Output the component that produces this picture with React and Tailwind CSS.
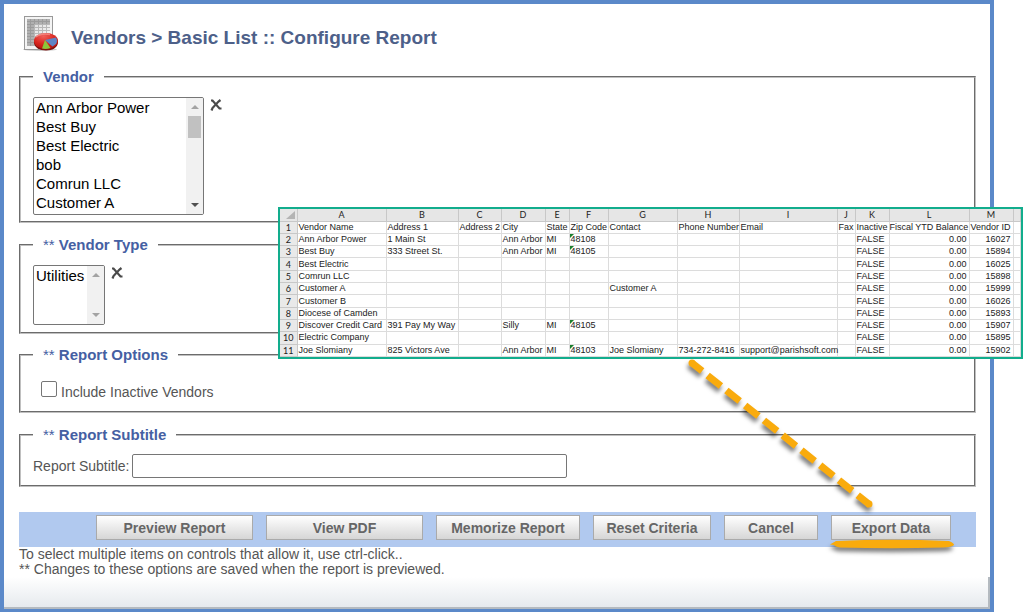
import React from 'react';

const vendors = ['Ann Arbor Power', 'Best Buy', 'Best Electric', 'bob', 'Comrun LLC', 'Customer A', 'Customer B'];

const actions = [
    { label: 'Preview Report', width: 'w-[157px]' },
    { label: 'View PDF', width: 'w-[157px]' },
    { label: 'Memorize Report', width: 'w-36' },
    { label: 'Reset Criteria', width: 'w-[118px]' },
    { label: 'Cancel', width: 'w-[94px]' },
    { label: 'Export Data', width: 'w-[120px]' },
];

const columns = [
    { letter: 'A', title: 'Vendor Name', width: 'w-[89px]' },
    { letter: 'B', title: 'Address 1', width: 'w-[72px]' },
    { letter: 'C', title: 'Address 2', width: 'w-[43px]' },
    { letter: 'D', title: 'City', width: 'w-[44px]' },
    { letter: 'E', title: 'State', width: 'w-[24px]' },
    { letter: 'F', title: 'Zip Code', width: 'w-[39px]' },
    { letter: 'G', title: 'Contact', width: 'w-[69px]' },
    { letter: 'H', title: 'Phone Number', width: 'w-[62px]' },
    { letter: 'I', title: 'Email', width: 'w-[98px]' },
    { letter: 'J', title: 'Fax', width: 'w-[18px]' },
    { letter: 'K', title: 'Inactive', width: 'w-[34px]' },
    { letter: 'L', title: 'Fiscal YTD Balance', width: 'w-[80px]', right: true },
    { letter: 'M', title: 'Vendor ID', width: 'w-[44px]', right: true },
    { letter: '', title: '', width: 'w-[7px]' },
];

const rows = [
    { name: 'Ann Arbor Power', address: '1 Main St', city: 'Ann Arbor', state: 'MI', zip: '48108', id: '16027' },
    { name: 'Best Buy', address: '333 Street St.', city: 'Ann Arbor', state: 'MI', zip: '48105', id: '15894' },
    { name: 'Best Electric', id: '16025' },
    { name: 'Comrun LLC', id: '15898' },
    { name: 'Customer A', contact: 'Customer A', id: '15999' },
    { name: 'Customer B', id: '16026' },
    { name: 'Diocese of Camden', id: '15893' },
    { name: 'Discover Credit Card', address: '391 Pay My Way', city: 'Silly', state: 'MI', zip: '48105', id: '15907' },
    { name: 'Electric Company', id: '15895' },
    {
        name: 'Joe Slomiany',
        address: '825 Victors Ave',
        city: 'Ann Arbor',
        state: 'MI',
        zip: '48103',
        contact: 'Joe Slomiany',
        phone: '734-272-8416',
        email: 'support@parishsoft.com',
        id: '15902',
    },
];

const ReportIcon = () => (
    <svg width="36" height="36" viewBox="0 0 36 36" aria-hidden="true">
        <defs>
            <linearGradient id="sheet" x1="0" y1="0" x2="1" y2="1">
                <stop offset="0" stopColor="#d9d9d9" />
                <stop offset="1" stopColor="#fafafa" />
            </linearGradient>
            <radialGradient id="pie" cx="0.4" cy="0.2" r="0.8">
                <stop offset="0" stopColor="#f0605a" />
                <stop offset="0.6" stopColor="#d9261f" />
                <stop offset="1" stopColor="#b3140f" />
            </radialGradient>
        </defs>
        <ellipse cx="17" cy="33.5" rx="17" ry="1.5" fill="#999" opacity="0.5" />
        <rect x="1.5" y="0.5" width="28" height="33" fill="#f4f4f4" stroke="#999" />
        <rect x="4" y="3" width="23" height="27" fill="url(#sheet)" />
        <rect x="4" y="3" width="7" height="27" fill="#b0b0b0" />
        <rect x="4" y="3" width="23" height="5" fill="#b0b0b0" />
        <path
            d="M4 5.5H27M4 8.5H27M4 11.5H27M4 14.5H27M4 17.5H27M4 20.5H27M4 23.5H27M4 26.5H27M7.5 3V30M11.5 3V30M15.5 3V30M19.5 3V30M23.5 3V30"
            stroke="#888"
            strokeWidth="1"
            opacity="0.5"
        />
        <ellipse cx="23" cy="26.5" rx="12" ry="8" fill="#7d100c" />
        <ellipse cx="23" cy="25" rx="12" ry="8" fill="url(#pie)" />
        <path d="M22 24L33 21.5Q35 25 33 28L29.5 30.5Z" fill="#5d83c4" />
        <path d="M22 24L27.5 32Q23 33.5 19 32.5Z" fill="#8cc63a" />
        <path d="M13 21Q18 17 27 18.5" stroke="#f79a95" strokeWidth="1.5" fill="none" opacity="0.7" />
    </svg>
);

const ClearButton = ({ label }) => (
    <button type="button" aria-label={label} className="ml-1.5 mt-0.5 flex h-3 w-3">
        <svg width="12" height="12" viewBox="0 0 12 12" fill="none" stroke="#4a4a4a" aria-hidden="true">
            <path d="M1 1.5H2.5L9.5 9.5H11.5" strokeWidth="2.2" />
            <path d="M10.5 1L8.5 2.5L2.5 9L1.5 11.5" strokeWidth="2.2" />
        </svg>
    </button>
);

const ListBox = ({ label, options, size, className, thumb }) => (
    <div className={`flex overflow-hidden rounded-xs border border-[#767676] ${className}`}>
        <select
            multiple
            size={size}
            aria-label={label}
            className="min-w-0 flex-1 overflow-hidden pt-px text-[15px] text-black outline-none"
        >
            {options.map((option) => (
                <option key={option} className="h-[19px] min-h-0 p-0 pl-0.5 leading-[19px]">{option}</option>
            ))}
        </select>
        <div aria-hidden="true" className="flex w-[17px] shrink-0 flex-col items-center justify-between bg-[#f1f1f1] py-1.5">
            <svg width="8" height="6" viewBox="0 0 8 6">
                <path d="M0 5L4 1L8 5Z" fill="#a3a3a3" />
            </svg>
            {thumb && <div className="mb-auto mt-1.5 h-[22px] w-[13px] bg-[#c1c1c1]" />}
            <svg width="8" height="6" viewBox="0 0 8 6">
                <path d="M0 1L4 5L8 1Z" fill={thumb ? '#505050' : '#a3a3a3'} />
            </svg>
        </div>
    </div>
);

const Section = ({ title, starred, className, children }) => (
    <fieldset className={`border-2 border-[#c0c0c0] [border-style:groove] px-3 ${className}`}>
        <legend className="px-2.5 text-[15px] leading-[18px] text-[#4560a3]">
            {starred && '** '}
            <b>{title}</b>
        </legend>
        {children}
    </fieldset>
);

const Cell = ({ right, zip, children }) => (
    <td className={`border-b border-r border-[#dcdcdc] p-0 ${right ? 'pr-0.5 text-right' : 'pl-px'} ${zip ? 'relative' : ''}`}>
        {zip && (
            <svg width="4" height="4" viewBox="0 0 4 4" className="absolute left-0 top-0" aria-hidden="true">
                <path d="M0 0H4L0 4Z" fill="#1a7f2c" />
            </svg>
        )}
        {children}
    </td>
);

const RowNumber = ({ children }) => (
    <th className="border-b border-r border-[#c8c8c8] bg-[#e9e9e9] p-0 text-center font-[Lato,sans-serif] font-normal">
        {children}
    </th>
);

const Spreadsheet = () => (
    <div className="absolute left-[278px] top-[207px] border-2 border-[#12ad8d] bg-white">
        <table className="h-[148px] w-[740px] table-fixed border-collapse whitespace-nowrap text-[9px] leading-[11px] text-[#222]">
            <thead>
                <tr className="h-3 bg-[#e6e6e6]">
                    <th className="w-[17px] border-b border-r border-[#c8c8c8] p-0">
                        <svg width="9" height="8" viewBox="0 0 9 8" className="ml-auto mr-0.5" aria-hidden="true">
                            <path d="M9 0V8H0Z" fill="#b4b4b4" />
                        </svg>
                    </th>
                    {columns.map((col) => (
                        <th
                            key={col.title}
                            className={`border-b border-r border-[#c8c8c8] p-0 text-center font-[Lato,sans-serif] font-normal ${col.width}`}
                        >
                            {col.letter}
                        </th>
                    ))}
                </tr>
            </thead>
            <tbody>
                <tr>
                    <RowNumber>1</RowNumber>
                    {columns.map((col) => (
                        <Cell key={col.title} right={col.right}>{col.title}</Cell>
                    ))}
                </tr>
                {rows.map((row, i) => (
                    <tr key={row.id}>
                        <RowNumber>{i + 2}</RowNumber>
                        <Cell>{row.name}</Cell>
                        <Cell>{row.address}</Cell>
                        <Cell />
                        <Cell>{row.city}</Cell>
                        <Cell>{row.state}</Cell>
                        <Cell zip={row.zip}>{row.zip}</Cell>
                        <Cell>{row.contact}</Cell>
                        <Cell>{row.phone}</Cell>
                        <Cell>{row.email}</Cell>
                        <Cell />
                        <Cell>FALSE</Cell>
                        <Cell right>0.00</Cell>
                        <Cell right>{row.id}</Cell>
                        <Cell />
                    </tr>
                ))}
            </tbody>
        </table>
    </div>
);

// Dashed pointer from the sheet to the Export Data button, plus its underline
const Callout = () => (
    <svg
        width="300"
        height="210"
        viewBox="0 0 300 210"
        className="pointer-events-none absolute left-[680px] top-[350px] drop-shadow-[-1px_4px_2px_rgba(0,0,0,0.5)]"
        aria-hidden="true"
    >
        <g fill="#f9ab0d">
            <path d="M12 13L190 155" stroke="#f9ab0d" strokeWidth="7" strokeDasharray="17 7" strokeDashoffset="4" fill="none" />
            <circle cx="12" cy="13" r="3.5" />
            <circle cx="189" cy="154" r="3.5" />
            <path d="M150 194.5L156 191Q212 188.5 269 191Q274 193 274 195Q272 197 262 197.5Q212 199 160 197.5Q155 196.5 154 195Z" />
        </g>
    </svg>
);

const App = () => (
    <div className="relative font-['Liberation_Sans',Arial,sans-serif] text-sm text-[#555]">
        <main className="mr-[30px] border-4 border-[#5b89c9] bg-white">
            <form className="pl-[15px] pr-3.5 pt-3" onSubmit={(e) => e.preventDefault()}>
                <header className="flex items-center gap-3 pl-1">
                    <ReportIcon />
                    <h1 className="pt-2 text-[19px] font-bold leading-7 text-[#4d6089]">
                        Vendors &gt; Basic List :: Configure Report
                    </h1>
                </header>

                <Section title="Vendor" className="mt-4 pb-1.5">
                    <div className="mt-[11px] flex items-start">
                        <ListBox label="Vendor" options={vendors} size={6} thumb className="h-[118px] w-[171px]" />
                        <ClearButton label="Clear vendors" />
                    </div>
                </Section>

                <Section title="Vendor Type" starred className="mt-[13px] pb-[7px]">
                    <div className="mt-[11px] flex items-start">
                        <ListBox label="Vendor Type" options={['Utilities']} size={3} className="h-[60px] w-[72px]" />
                        <ClearButton label="Clear vendor types" />
                    </div>
                </Section>

                <Section title="Report Options" starred className="mt-3 pb-[9px]">
                    <label className="mt-[17px] flex items-end gap-1 pl-2 leading-5">
                        <input
                            type="checkbox"
                            className="mb-[5px] h-4 w-4 appearance-none rounded-xs border border-[#767676] bg-white"
                        />
                        Include Inactive Vendors
                    </label>
                </Section>

                <Section title="Report Subtitle" starred className="mt-[13px] pb-[7px]">
                    <div className="mt-2.5 flex items-center gap-0.5">
                        <label htmlFor="subtitle">Report Subtitle:</label>
                        <input
                            id="subtitle"
                            type="text"
                            className="h-6 w-[435px] rounded-xs border border-[#767676] bg-white px-1"
                        />
                    </div>
                </Section>

                <div className="mt-[25px] flex justify-end gap-[13px] bg-[#b1c9ef] pb-[7px] pl-3 pr-[25px] pt-[3px]">
                    {actions.map((action) => (
                        <button
                            key={action.label}
                            type="button"
                            className={`h-[25px] border border-[#aaa] bg-linear-to-b from-white to-[#d6d6d6] text-sm font-bold text-[#666] ${action.width}`}
                        >
                            {action.label}
                        </button>
                    ))}
                </div>

                <div className="leading-[15px]">
                    <p>To select multiple items on controls that allow it, use ctrl-click..</p>
                    <p>** Changes to these options are saved when the report is previewed.</p>
                </div>
            </form>
            <div className="h-8 border-b-2 border-r-2 border-[#b4bac0] bg-linear-to-b from-white to-[#e6eaee]" />
        </main>

        <Spreadsheet />
        <Callout />
    </div>
);

export default App;
